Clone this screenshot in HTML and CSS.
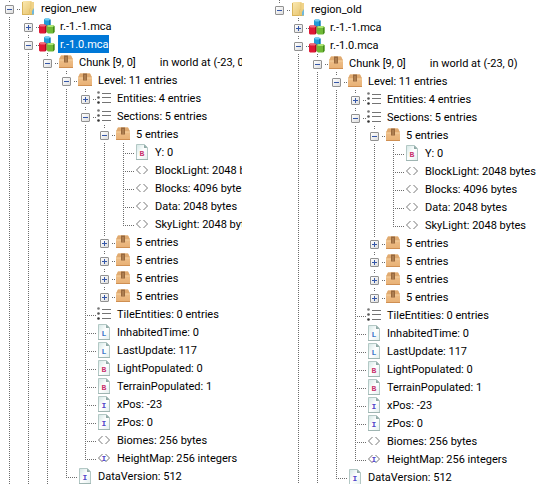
FILE: index.html
```html
<!DOCTYPE html>
<html lang="en">
<head>
<meta charset="utf-8">
<title>Region comparison</title>
<link rel="stylesheet" href="styles.css">
</head>
<body>
<svg class="sprites" aria-hidden="true">
  <defs>
    <linearGradient id="gFolder" x1="0" y1="0" x2="1" y2="1"><stop offset="0" stop-color="#fbeab5"/><stop offset="1" stop-color="#e5bf62"/></linearGradient>
    <linearGradient id="gCarton" x1="0" y1="0" x2="0" y2="1"><stop offset="0" stop-color="#f0c592"/><stop offset="1" stop-color="#e8b074"/></linearGradient>
    <linearGradient id="gDoc" x1="0" y1="0" x2="1" y2="1"><stop offset="0" stop-color="#d3e7e5"/><stop offset=".5" stop-color="#ffffff"/><stop offset="1" stop-color="#e3efed"/></linearGradient>
    <symbol id="folder" viewBox="0 0 16 16">
      <path d="M2 2.500 3 1h8.500v1h2.500v13H2z" fill="url(#gFolder)"/>
      <path d="M2.500 2v13M2 14.500h10" stroke="#d9b55d" fill="none"/>
      <path d="M11 1.500v6l-1.500 2v5.500" stroke="#e3c373" fill="none"/>
      <path d="M11.500 2h2.500v7l-2.500-1z" fill="#f0d38a"/>
      <path d="M12 15v-4l2-3v6z" fill="#70b8dc"/>
    </symbol>
    <symbol id="blocks" viewBox="0 0 16 16">
      <path d="M5 1.500 6 .5h4l1.500 1V7L10 8H6L5 7z" fill="#219bd7"/><path d="M5.500 1.500 6.500.500h3.500l1 1-1 1H6.500z" fill="#70cdf2"/><path d="M10 2.500 11.500 1.500V7L10 8z" fill="#1279b2"/>
      <path d="M-.5 7.500 1 6.500h5l1.500 1v6.500L6 15.500H1L-.5 14z" fill="#df1835"/><path d="M.5 7.500 1.500 6.500h4.500l1 1-1 1h-4.500z" fill="#f06c7c"/><path d="M6 8.500l1.500-1v6.500L6 15.500z" fill="#a70c26"/>
      <path d="M7.500 8 9 7h5l1.500 1v6l-1.500 1.500H9L7.500 14z" fill="#6fb936"/><path d="M8 8 9.500 7h4.500l1 1-1 1H9.500z" fill="#ade475"/><path d="M14 9l1.500-1v6L14 15.500z" fill="#458a1c"/>
    </symbol>
    <symbol id="carton" viewBox="0 0 16 16">
      <path d="M3 1.500h10l2 4V14H1V5.500z" fill="url(#gCarton)"/>
      <path d="M3 1.500h10l2 4H1z" fill="#e0aa70"/>
      <path d="M1 6h14" stroke="#f4cf9d"/>
      <path d="M1 13.500h14" stroke="#cf8f52"/>
      <path d="M6 1.500h4V9L9 8 8 9 7 8 6 9z" fill="#98693e"/>
      <path d="M8 3v5" stroke="#c19361"/>
    </symbol>
    <symbol id="list" viewBox="0 0 16 16">
      <path d="M6 3.500H15M6 7.500H15M6 12.500H15" stroke="#747474"/>
      <circle cx="2.500" cy="2.500" r="1.300" fill="#777"/><circle cx="2.500" cy="7.500" r="1.300" fill="#555"/><circle cx="2.500" cy="12.500" r="1.300" fill="#333"/>
    </symbol>
    <symbol id="doc" viewBox="0 0 16 16">
      <path d="M2.500.5h8l3 3v12h-11z" fill="url(#gDoc)" stroke="#b3c8c5"/>
      <path d="M10 .5v3.500h3.500z" fill="#8fa9a6"/>
      <path d="M2 15.500h12" stroke="#9fb5b2"/>
    </symbol>
    <symbol id="docB" viewBox="0 0 16 16"><use href="#doc"/><text class="glyph glyph-b" x="8" y="12">B</text></symbol>
    <symbol id="docL" viewBox="0 0 16 16"><use href="#doc"/><text class="glyph glyph-l" x="8" y="12">L</text></symbol>
    <symbol id="docI" viewBox="0 0 16 16"><use href="#doc"/><text class="glyph glyph-i" x="8" y="12">I</text></symbol>
    <symbol id="angles" viewBox="0 0 16 16"><path d="M6.500 4 2.500 8l4 4M9.500 4l4 4-4 4" fill="none" stroke="#777"/></symbol>
    <symbol id="anglesI" viewBox="0 0 16 16"><use href="#angles"/><text class="glyph glyph-i" x="8" y="11">I</text></symbol>
  </defs>
</svg>
<main class="compare">
  <section class="pane pane-new" aria-label="region_new">
    <ul class="tree">
      <li><div class="row"><button class="toggle" aria-label="Collapse"></button><svg class="icon"><use href="#folder"/></svg><span class="label">region_new</span></div>
        <ul>
          <li><div class="row"><button class="toggle closed" aria-label="Expand"></button><svg class="icon"><use href="#blocks"/></svg><span class="label">r.-1.-1.mca</span></div></li>
          <li><div class="row"><button class="toggle" aria-label="Collapse"></button><svg class="icon"><use href="#blocks"/></svg><span class="label selected">r.-1.0.mca</span></div>
            <ul>
              <li><div class="row"><button class="toggle" aria-label="Collapse"></button><svg class="icon"><use href="#carton"/></svg><span class="label">Chunk [9, 0]</span><span class="position">in world at (-23, 0)</span></div>
                <ul>
                  <li><div class="row"><button class="toggle" aria-label="Collapse"></button><svg class="icon"><use href="#carton"/></svg><span class="label">Level: 11 entries</span></div>
                    <ul>
                      <li><div class="row"><button class="toggle closed" aria-label="Expand"></button><svg class="icon"><use href="#list"/></svg><span class="label">Entities: 4 entries</span></div></li>
                      <li><div class="row"><button class="toggle" aria-label="Collapse"></button><svg class="icon"><use href="#list"/></svg><span class="label">Sections: 5 entries</span></div>
                        <ul>
                          <li><div class="row"><button class="toggle" aria-label="Collapse"></button><svg class="icon"><use href="#carton"/></svg><span class="label">5 entries</span></div>
                            <ul>
                              <li><div class="row leaf"><svg class="icon"><use href="#docB"/></svg><span class="label">Y: 0</span></div></li>
                              <li><div class="row leaf"><svg class="icon"><use href="#angles"/></svg><span class="label">BlockLight: 2048 bytes</span></div></li>
                              <li><div class="row leaf"><svg class="icon"><use href="#angles"/></svg><span class="label">Blocks: 4096 bytes</span></div></li>
                              <li><div class="row leaf"><svg class="icon"><use href="#angles"/></svg><span class="label">Data: 2048 bytes</span></div></li>
                              <li class="last"><div class="row leaf"><svg class="icon"><use href="#angles"/></svg><span class="label">SkyLight: 2048 bytes</span></div></li>
                            </ul>
                          </li>
                          <li><div class="row"><button class="toggle closed" aria-label="Expand"></button><svg class="icon"><use href="#carton"/></svg><span class="label">5 entries</span></div></li>
                          <li><div class="row"><button class="toggle closed" aria-label="Expand"></button><svg class="icon"><use href="#carton"/></svg><span class="label">5 entries</span></div></li>
                          <li><div class="row"><button class="toggle closed" aria-label="Expand"></button><svg class="icon"><use href="#carton"/></svg><span class="label">5 entries</span></div></li>
                          <li class="last"><div class="row"><button class="toggle closed" aria-label="Expand"></button><svg class="icon"><use href="#carton"/></svg><span class="label">5 entries</span></div></li>
                        </ul>
                      </li>
                      <li><div class="row leaf"><svg class="icon"><use href="#list"/></svg><span class="label">TileEntities: 0 entries</span></div></li>
                      <li><div class="row leaf"><svg class="icon"><use href="#docL"/></svg><span class="label">InhabitedTime: 0</span></div></li>
                      <li><div class="row leaf"><svg class="icon"><use href="#docL"/></svg><span class="label">LastUpdate: 117</span></div></li>
                      <li><div class="row leaf"><svg class="icon"><use href="#docB"/></svg><span class="label">LightPopulated: 0</span></div></li>
                      <li><div class="row leaf"><svg class="icon"><use href="#docB"/></svg><span class="label">TerrainPopulated: 1</span></div></li>
                      <li><div class="row leaf"><svg class="icon"><use href="#docI"/></svg><span class="label">xPos: -23</span></div></li>
                      <li><div class="row leaf"><svg class="icon"><use href="#docI"/></svg><span class="label">zPos: 0</span></div></li>
                      <li><div class="row leaf"><svg class="icon"><use href="#angles"/></svg><span class="label">Biomes: 256 bytes</span></div></li>
                      <li class="last"><div class="row leaf"><svg class="icon"><use href="#anglesI"/></svg><span class="label">HeightMap: 256 integers</span></div></li>
                    </ul>
                  </li>
                  <li class="last"><div class="row leaf"><svg class="icon"><use href="#docI"/></svg><span class="label">DataVersion: 512</span></div></li>
                </ul>
              </li>
            </ul>
          </li>
        </ul>
      </li>
    </ul>
  </section>
  <section class="pane pane-old" aria-label="region_old">
    <ul class="tree">
      <li class="last"><div class="row"><button class="toggle" aria-label="Collapse"></button><svg class="icon"><use href="#folder"/></svg><span class="label">region_old</span></div>
        <ul>
          <li><div class="row"><button class="toggle closed" aria-label="Expand"></button><svg class="icon"><use href="#blocks"/></svg><span class="label">r.-1.-1.mca</span></div></li>
          <li><div class="row"><button class="toggle" aria-label="Collapse"></button><svg class="icon"><use href="#blocks"/></svg><span class="label">r.-1.0.mca</span></div>
            <ul>
              <li><div class="row"><button class="toggle" aria-label="Collapse"></button><svg class="icon"><use href="#carton"/></svg><span class="label">Chunk [9, 0]</span><span class="position">in world at (-23, 0)</span></div>
                <ul>
                  <li><div class="row"><button class="toggle" aria-label="Collapse"></button><svg class="icon"><use href="#carton"/></svg><span class="label">Level: 11 entries</span></div>
                    <ul>
                      <li><div class="row"><button class="toggle closed" aria-label="Expand"></button><svg class="icon"><use href="#list"/></svg><span class="label">Entities: 4 entries</span></div></li>
                      <li><div class="row"><button class="toggle" aria-label="Collapse"></button><svg class="icon"><use href="#list"/></svg><span class="label">Sections: 5 entries</span></div>
                        <ul>
                          <li><div class="row"><button class="toggle" aria-label="Collapse"></button><svg class="icon"><use href="#carton"/></svg><span class="label">5 entries</span></div>
                            <ul>
                              <li><div class="row leaf"><svg class="icon"><use href="#docB"/></svg><span class="label">Y: 0</span></div></li>
                              <li><div class="row leaf"><svg class="icon"><use href="#angles"/></svg><span class="label">BlockLight: 2048 bytes</span></div></li>
                              <li><div class="row leaf"><svg class="icon"><use href="#angles"/></svg><span class="label">Blocks: 4096 bytes</span></div></li>
                              <li><div class="row leaf"><svg class="icon"><use href="#angles"/></svg><span class="label">Data: 2048 bytes</span></div></li>
                              <li class="last"><div class="row leaf"><svg class="icon"><use href="#angles"/></svg><span class="label">SkyLight: 2048 bytes</span></div></li>
                            </ul>
                          </li>
                          <li><div class="row"><button class="toggle closed" aria-label="Expand"></button><svg class="icon"><use href="#carton"/></svg><span class="label">5 entries</span></div></li>
                          <li><div class="row"><button class="toggle closed" aria-label="Expand"></button><svg class="icon"><use href="#carton"/></svg><span class="label">5 entries</span></div></li>
                          <li><div class="row"><button class="toggle closed" aria-label="Expand"></button><svg class="icon"><use href="#carton"/></svg><span class="label">5 entries</span></div></li>
                          <li class="last"><div class="row"><button class="toggle closed" aria-label="Expand"></button><svg class="icon"><use href="#carton"/></svg><span class="label">5 entries</span></div></li>
                        </ul>
                      </li>
                      <li><div class="row leaf"><svg class="icon"><use href="#list"/></svg><span class="label">TileEntities: 0 entries</span></div></li>
                      <li><div class="row leaf"><svg class="icon"><use href="#docL"/></svg><span class="label">InhabitedTime: 0</span></div></li>
                      <li><div class="row leaf"><svg class="icon"><use href="#docL"/></svg><span class="label">LastUpdate: 117</span></div></li>
                      <li><div class="row leaf"><svg class="icon"><use href="#docB"/></svg><span class="label">LightPopulated: 0</span></div></li>
                      <li><div class="row leaf"><svg class="icon"><use href="#docB"/></svg><span class="label">TerrainPopulated: 1</span></div></li>
                      <li><div class="row leaf"><svg class="icon"><use href="#docI"/></svg><span class="label">xPos: -23</span></div></li>
                      <li><div class="row leaf"><svg class="icon"><use href="#docI"/></svg><span class="label">zPos: 0</span></div></li>
                      <li><div class="row leaf"><svg class="icon"><use href="#angles"/></svg><span class="label">Biomes: 256 bytes</span></div></li>
                      <li class="last"><div class="row leaf"><svg class="icon"><use href="#anglesI"/></svg><span class="label">HeightMap: 256 integers</span></div></li>
                    </ul>
                  </li>
                  <li class="last"><div class="row leaf"><svg class="icon"><use href="#docI"/></svg><span class="label">DataVersion: 512</span></div></li>
                </ul>
              </li>
            </ul>
          </li>
        </ul>
      </li>
    </ul>
  </section>
</main>
</body>
</html>
```

FILE: styles.css
```css
* {
  box-sizing: border-box;
}

body {
  margin: 0;
  background: #fff;
  color: #000;
  font: 11px/20px Roboto, "Liberation Sans", sans-serif;
}

.sprites {
  display: block;
  width: 0;
  height: 0;
}

.compare {
  display: grid;
  grid-template-columns: 242px 1fr;
  height: 100vh;
  overflow: hidden;
}

.pane {
  min-width: 0;
  overflow: hidden;
}

.pane-old {
  padding-left: 28px;
}

.pane-new .tree {
  margin-top: -1px;
}

ul {
  list-style: none;
  margin: 0;
  padding: 0;
}

ul ul {
  padding-left: 19px;
}

/* Each item draws the guide line of its own level. */
li {
  background: repeating-linear-gradient(#6c6c6c 0 1px, transparent 1px 2px) 9px 0 / 1px 100% no-repeat;
}

li.last {
  background-size: 1px 11px;
}

.row {
  display: flex;
  align-items: flex-start;
  height: 18px;
  white-space: nowrap;
  background: repeating-linear-gradient(90deg, #6c6c6c 0 1px, transparent 1px 2px) 9px 10px / 11px 1px no-repeat;
}

.leaf {
  padding-left: 20px;
}

.toggle {
  flex: none;
  width: 9px;
  height: 9px;
  margin: 6px 6px 0 5px;
  padding: 0;
  border: 1px solid #919191;
  border-radius: 1px;
  box-shadow: 0 0 0 2px #fff;
  background:
    linear-gradient(#3557a8, #3557a8) center / 5px 1px no-repeat,
    linear-gradient(135deg, #fff, #dedede);
}

.toggle.closed {
  background:
    linear-gradient(#3557a8, #3557a8) center / 5px 1px no-repeat,
    linear-gradient(#3557a8, #3557a8) center / 1px 5px no-repeat,
    linear-gradient(135deg, #fff, #dedede);
}

.icon {
  flex: none;
  width: 16px;
  height: 16px;
  margin-top: 1px;
  overflow: visible;
}

.label {
  height: 18px;
  margin-left: 3px;
  padding-left: 2px;
}

.selected {
  background: #0078d7;
  color: #fff;
}

.position {
  margin-left: 24px;
}

.glyph {
  font: bold 8px "Liberation Mono", monospace;
  text-anchor: middle;
}

.glyph-b {
  fill: #c8326e;
}

.glyph-l {
  fill: #3c78c8;
}

.glyph-i {
  fill: #5046c8;
}
```
